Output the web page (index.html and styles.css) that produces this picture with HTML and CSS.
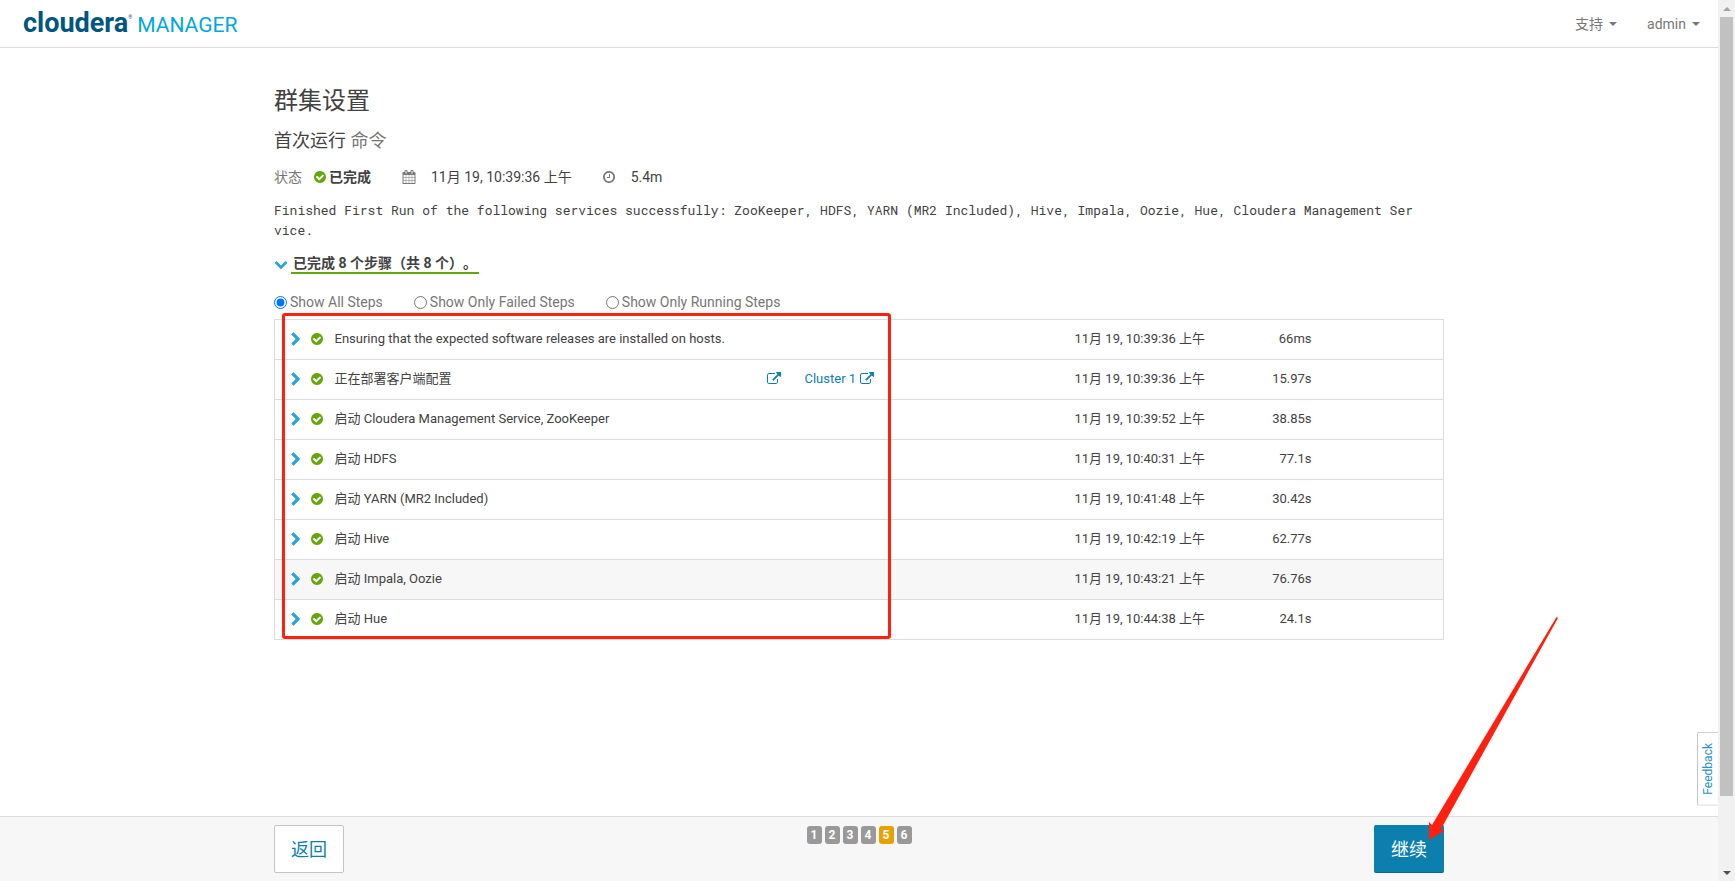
FILE: index.html
```html
<!DOCTYPE html>
<html lang="zh-CN">
<head>
    <meta charset="UTF-8">
    <meta name="viewport" content="width=device-width, initial-scale=1.0">
    <title>群集设置 - Cloudera Manager</title>
    <link rel="stylesheet" href="styles.css">
</head>
<body>
    <svg class="sprite" aria-hidden="true">
        <symbol id="check" viewBox="0 0 1792 1792"><path d="M1412 734q0-28-18-46l-91-90q-19-19-45-19t-45 19l-408 407-226-226q-19-19-45-19t-45 19l-91 90q-18 18-18 46 0 27 18 45l362 362q19 19 45 19 27 0 46-19l543-543q18-18 18-45zm252 162q0 209-103 385.500t-279.500 279.500-385.500 103-385.500-103-279.500-279.500-103-385.500 103-385.500 279.500-279.500 385.500-103 385.500 103 279.500 279.500 103 385.500z"/></symbol>
        <symbol id="clock" viewBox="0 0 1792 1792"><path d="M1024 544v448q0 14-9 23t-23 9h-320q-14 0-23-9t-9-23v-64q0-14 9-23t23-9h224v-352q0-14 9-23t23-9h64q14 0 23 9t9 23zm416 352q0-148-73-273t-198-198-273-73-273 73-198 198-73 273 73 273 198 198 273 73 273-73 198-198 73-273zm224 0q0 209-103 385.500t-279.500 279.500-385.500 103-385.500-103-279.500-279.500-103-385.500 103-385.500 279.500-279.500 385.500-103 385.500 103 279.500 279.500 103 385.500z"/></symbol>
        <symbol id="calendar" viewBox="0 0 1792 1792"><path d="M192 1664h288v-288h-288v288zm352 0h320v-288h-320v288zm-352-352h288v-320h-288v320zm352 0h320v-320h-320v320zm-352-384h288v-288h-288v288zm736 736h320v-288h-320v288zm-384-736h320v-288h-320v288zm768 736h288v-288h-288v288zm-384-352h320v-320h-320v320zm-352-864v-288q0-13-9.500-22.500t-22.500-9.500h-64q-13 0-22.500 9.500t-9.500 22.500v288q0 13 9.500 22.500t22.500 9.500h64q13 0 22.500-9.500t9.500-22.500zm736 864h288v-320h-288v320zm-384-384h320v-288h-320v288zm384 0h288v-288h-288v288zm32-480v-288q0-13-9.500-22.500t-22.500-9.500h-64q-13 0-22.500 9.500t-9.500 22.500v288q0 13 9.500 22.500t22.500 9.500h64q13 0 22.500-9.500t9.500-22.500zm384-64v1280q0 52-38 90t-90 38h-1408q-52 0-90-38t-38-90v-1280q0-52 38-90t90-38h128v-96q0-66 47-113t113-47h64q66 0 113 47t47 113v96h384v-96q0-66 47-113t113-47h64q66 0 113 47t47 113v96h128q52 0 90 38t38 90z"/></symbol>
        <symbol id="right" viewBox="0 0 1792 1792"><path d="M1363 877l-742 742q-19 19-45 19t-45-19l-166-166q-19-19-19-45t19-45l531-531-531-531q-19-19-19-45t19-45l166-166q19-19 45-19t45 19l742 742q19 19 19 45t-19 45z" transform="translate(0 64)"/></symbol>
        <symbol id="down" viewBox="0 0 1792 1792"><path d="M1683 808l-742 741q-19 19-45 19t-45-19l-742-741q-19-19-19-45.500t19-45.500l166-165q19-19 45-19t45 19l531 531 531-531q19-19 45-19t45 19l166 165q19 19 19 45.500t-19 45.500z"/></symbol>
        <symbol id="external" viewBox="0 0 1792 1792"><path d="M1408 928v320q0 119-84.500 203.500t-203.500 84.500h-832q-119 0-203.500-84.500t-84.500-203.500v-832q0-119 84.500-203.500t203.500-84.500h704q14 0 23 9t9 23v64q0 14-9 23t-23 9h-704q-66 0-113 47t-47 113v832q0 66 47 113t113 47h832q66 0 113-47t47-113v-320q0-14 9-23t23-9h64q14 0 23 9t9 23zm384-864v512q0 26-19 45t-45 19-45-19l-176-176-652 652q-10 10-23 10t-23-10l-114-114q-10-10-10-23t10-23l652-652-176-176q-19-19-19-45t19-45 45-19h512q26 0 45 19t19 45z"/></symbol>
    </svg>

    <div class="window">
        <div class="page">
            <header class="navbar">
                <a class="brand" href="#"><span class="brand-name">cloudera</span><span class="brand-mark">®</span><span class="brand-product">MANAGER</span></a>
                <nav class="nav">
                    <a href="#">支持 <span class="caret"></span></a>
                    <a href="#">admin <span class="caret"></span></a>
                </nav>
            </header>

            <main class="main">
                <div class="container">
                    <h1>群集设置</h1>
                    <h2>首次运行 <small>命令</small></h2>

                    <div class="status">
                        <span class="status-label">状态</span>
                        <span class="status-result"><svg class="icon green"><use href="#check"/></svg><strong>已完成</strong></span>
                        <span class="status-item"><svg class="icon gray"><use href="#calendar"/></svg>11月 19, 10:39:36 上午</span>
                        <span class="status-item"><svg class="icon gray"><use href="#clock"/></svg>5.4m</span>
                    </div>

                    <p class="message">Finished First Run of the following services successfully: ZooKeeper, HDFS, YARN (MR2 Included), Hive, Impala, Oozie, Hue, Cloudera Management Service.</p>

                    <button class="toggle" type="button"><svg class="icon blue"><use href="#down"/></svg><span class="toggle-text">已完成 8 个步骤（共 8 个）。</span></button>

                    <div class="filters">
                        <label><input type="radio" name="filter" checked>Show All Steps</label>
                        <label><input type="radio" name="filter">Show Only Failed Steps</label>
                        <label><input type="radio" name="filter">Show Only Running Steps</label>
                    </div>

                    <div class="steps-wrap">
                        <table class="steps">
                            <colgroup>
                                <col class="col-expand">
                                <col class="col-state">
                                <col>
                                <col class="col-links">
                                <col class="col-time">
                                <col class="col-duration">
                                <col class="col-actions">
                            </colgroup>
                            <tbody>
                                <tr>
                                    <td class="expand"><svg class="icon blue"><use href="#right"/></svg></td>
                                    <td><svg class="icon green"><use href="#check"/></svg></td>
                                    <td>Ensuring that the expected software releases are installed on hosts.</td>
                                    <td></td>
                                    <td>11月 19, 10:39:36 上午</td>
                                    <td class="duration">66ms</td>
                                    <td></td>
                                </tr>
                                <tr>
                                    <td class="expand"><svg class="icon blue"><use href="#right"/></svg></td>
                                    <td><svg class="icon green"><use href="#check"/></svg></td>
                                    <td>正在部署客户端配置</td>
                                    <td>
                                        <div class="links">
                                            <a href="#" aria-label="Details"><svg class="icon"><use href="#external"/></svg></a>
                                            <a href="#">Cluster 1 <svg class="icon"><use href="#external"/></svg></a>
                                        </div>
                                    </td>
                                    <td>11月 19, 10:39:36 上午</td>
                                    <td class="duration">15.97s</td>
                                    <td></td>
                                </tr>
                                <tr>
                                    <td class="expand"><svg class="icon blue"><use href="#right"/></svg></td>
                                    <td><svg class="icon green"><use href="#check"/></svg></td>
                                    <td>启动 Cloudera Management Service, ZooKeeper</td>
                                    <td></td>
                                    <td>11月 19, 10:39:52 上午</td>
                                    <td class="duration">38.85s</td>
                                    <td></td>
                                </tr>
                                <tr>
                                    <td class="expand"><svg class="icon blue"><use href="#right"/></svg></td>
                                    <td><svg class="icon green"><use href="#check"/></svg></td>
                                    <td>启动 HDFS</td>
                                    <td></td>
                                    <td>11月 19, 10:40:31 上午</td>
                                    <td class="duration">77.1s</td>
                                    <td></td>
                                </tr>
                                <tr>
                                    <td class="expand"><svg class="icon blue"><use href="#right"/></svg></td>
                                    <td><svg class="icon green"><use href="#check"/></svg></td>
                                    <td>启动 YARN (MR2 Included)</td>
                                    <td></td>
                                    <td>11月 19, 10:41:48 上午</td>
                                    <td class="duration">30.42s</td>
                                    <td></td>
                                </tr>
                                <tr>
                                    <td class="expand"><svg class="icon blue"><use href="#right"/></svg></td>
                                    <td><svg class="icon green"><use href="#check"/></svg></td>
                                    <td>启动 Hive</td>
                                    <td></td>
                                    <td>11月 19, 10:42:19 上午</td>
                                    <td class="duration">62.77s</td>
                                    <td></td>
                                </tr>
                                <tr class="active">
                                    <td class="expand"><svg class="icon blue"><use href="#right"/></svg></td>
                                    <td><svg class="icon green"><use href="#check"/></svg></td>
                                    <td>启动 Impala, Oozie</td>
                                    <td></td>
                                    <td>11月 19, 10:43:21 上午</td>
                                    <td class="duration">76.76s</td>
                                    <td></td>
                                </tr>
                                <tr>
                                    <td class="expand"><svg class="icon blue"><use href="#right"/></svg></td>
                                    <td><svg class="icon green"><use href="#check"/></svg></td>
                                    <td>启动 Hue</td>
                                    <td></td>
                                    <td>11月 19, 10:44:38 上午</td>
                                    <td class="duration">24.1s</td>
                                    <td></td>
                                </tr>
                            </tbody>
                        </table>
                        <div class="highlight"></div>
                    </div>
                </div>
                <a class="feedback" href="#">Feedback</a>
            </main>

            <footer class="footer">
                <div class="container footer-inner">
                    <button class="btn" type="button">返回</button>
                    <div class="pager">
                        <span class="badge">1</span>
                        <span class="badge">2</span>
                        <span class="badge">3</span>
                        <span class="badge">4</span>
                        <span class="badge current">5</span>
                        <span class="badge">6</span>
                    </div>
                    <div class="next">
                        <button class="btn btn-primary" type="button">继续</button>
                        <svg class="arrow" viewBox="0 0 130 224" aria-hidden="true"><path d="M127.500 0L129 1 12 212 15 214 0 223V205L3 208z"/></svg>
                    </div>
                </div>
            </footer>
        </div>

        <div class="scrollbar" aria-hidden="true">
            <span class="scroll-up"></span>
            <span class="scroll-track"><span class="scroll-thumb"></span></span>
            <span class="scroll-down"></span>
        </div>
    </div>
</body>
</html>
```

FILE: styles.css
```css
* {
    box-sizing: border-box;
}

body {
    margin: 0;
    font-family: Roboto, "Noto Sans CJK SC", sans-serif;
    font-size: 14px;
    line-height: 20px;
    color: #424242;
    background-color: #fff;
}

a {
    color: #0b7fad;
    text-decoration: none;
}

button {
    font-family: inherit;
    cursor: pointer;
}

.sprite {
    display: none;
}

.icon {
    width: 14px;
    height: 14px;
    fill: currentColor;
    flex: none;
}

.green {
    color: #64a70b;
}

.blue {
    color: #29a3dc;
}

.gray {
    color: #777;
}

/* Window */
.window {
    display: flex;
    height: 100vh;
}

.page {
    flex: 1;
    min-width: 0;
    display: flex;
    flex-direction: column;
}

.container {
    max-width: 1170px;
    margin: 0 auto;
}

/* Top bar */
.navbar {
    display: flex;
    align-items: center;
    justify-content: space-between;
    height: 48px;
    padding: 0 18px 0 23px;
    border-bottom: 1px solid #dcdcdc;
}

.brand {
    display: flex;
    align-items: baseline;
    line-height: 28px;
}

.brand-name {
    font-size: 27px;
    font-weight: 700;
    color: #00567f;
}

.brand-mark {
    align-self: flex-start;
    font-size: 5px;
    line-height: 16px;
    color: #00567f;
}

.brand-product {
    margin-left: 5px;
    font-size: 21px;
    color: #00a7e1;
}

.nav {
    display: flex;
    gap: 30px;
}

.nav a {
    display: flex;
    align-items: center;
    gap: 6px;
    color: #777;
}

.caret {
    border: 4px solid transparent;
    border-top-color: #777;
    border-bottom: 0;
}

/* Content */
.main {
    position: relative;
    flex: 1;
    padding-top: 39px;
}

h1 {
    margin: 0 0 14px;
    font-size: 24px;
    font-weight: 400;
    line-height: 28px;
}

h2 {
    margin: 0 0 14px;
    font-size: 18px;
    font-weight: 400;
    line-height: 24px;
}

h2 small {
    font-size: 18px;
    color: #777;
}

.status {
    display: flex;
    margin-bottom: 13px;
}

.status-label {
    margin-right: 11px;
    color: #777;
}

.status-result {
    display: flex;
    align-items: center;
    gap: 2px;
    margin-right: 31px;
}

.status-item {
    display: flex;
    align-items: center;
    gap: 15px;
    margin-right: 30px;
}

.message {
    margin: 0 0 14px;
    padding-right: 26px;
    font-family: "Roboto Mono", "Liberation Mono", monospace;
    font-size: 13px;
    word-break: break-all;
}

.toggle {
    display: flex;
    align-items: center;
    gap: 3px;
    margin-bottom: 18px;
    padding: 0;
    border: 0;
    background: none;
    color: #424242;
    font-size: 14px;
    font-weight: 700;
}

.toggle-text {
    padding: 0 2px;
    line-height: 18px;
    border-bottom: 2px solid #64a70b;
    text-spacing-trim: space-all;
}

.filters {
    display: flex;
    gap: 31px;
    margin-bottom: 7px;
    color: #777;
}

.filters label {
    display: flex;
    align-items: center;
    gap: 3px;
}

.filters input {
    width: 13px;
    height: 13px;
    margin: 0;
}

/* Steps table */
.steps-wrap {
    position: relative;
}

.steps {
    width: 100%;
    table-layout: fixed;
    border-collapse: collapse;
    border: 1px solid #dcdcdc;
    font-size: 13px;
}

.steps td {
    height: 40px;
    padding: 0 0 2px;
    border-top: 1px solid #dcdcdc;
}

.steps .icon {
    display: block;
}

.steps .expand {
    padding-left: 14px;
}

.steps .expand .icon {
    stroke: currentColor;
    stroke-width: 80px;
}

.steps .duration {
    text-align: right;
}

.steps .active {
    background-color: #f7f7f7;
}

.col-expand {
    width: 35px;
}

.col-state {
    width: 25px;
}

.col-links {
    width: 308px;
}

.col-time {
    width: 140px;
}

.col-duration {
    width: 97px;
}

.col-actions {
    width: 132px;
}

.links {
    display: flex;
    gap: 24px;
}

.links a {
    display: flex;
    align-items: center;
    gap: 4px;
}

.highlight {
    position: absolute;
    top: -6px;
    bottom: 1px;
    left: 8px;
    width: 609px;
    border: 3px solid #ff2010;
    border-radius: 3px;
    pointer-events: none;
}

.feedback {
    position: absolute;
    right: 0;
    bottom: 10px;
    padding: 10px 0;
    border: 1px solid #c4c4c4;
    border-left: 0;
    border-radius: 0 2px 2px 0;
    background-color: #fff;
    color: #2a93c0;
    font-size: 12px;
    writing-mode: vertical-rl;
    transform: rotate(180deg);
}

/* Footer */
.footer {
    padding: 8px 0;
    border-top: 1px solid #dcdcdc;
    background-color: #f7f7f7;
}

.footer-inner {
    display: flex;
    justify-content: space-between;
}

.btn {
    height: 48px;
    padding: 0 16px 2px;
    border: 1px solid #c4c4c4;
    border-radius: 2px;
    background-color: #fff;
    color: #0b7fad;
    font-size: 18px;
}

.btn-primary {
    border-color: #0b7fad;
    border-bottom-color: #096a91;
    background-color: #0b7fad;
    color: #fff;
}

.pager {
    display: flex;
    gap: 3px;
    padding-top: 1px;
}

.badge {
    width: 15px;
    height: 18px;
    border-radius: 3px;
    background-color: #999;
    color: #fff;
    font-size: 12px;
    font-weight: 700;
    line-height: 18px;
    text-align: center;
}

.badge.current {
    background-color: #e9a100;
}

.next {
    position: relative;
}

.arrow {
    position: absolute;
    right: -115px;
    bottom: 32px;
    width: 130px;
    height: 224px;
    fill: #ff2010;
    pointer-events: none;
}

/* Scrollbar */
.scrollbar {
    display: flex;
    flex-direction: column;
    align-items: center;
    width: 17px;
    background-color: #f1f1f1;
}

.scroll-up,
.scroll-down {
    margin: 7px 0 6px;
    border: 4px solid transparent;
}

.scroll-up {
    border-top: 0;
    border-bottom-color: #a3a3a3;
}

.scroll-down {
    border-bottom: 0;
    border-top-color: #505050;
}

.scroll-track {
    flex: 1;
}

.scroll-thumb {
    display: block;
    width: 13px;
    height: 92%;
    background-color: #c1c1c1;
}
```
